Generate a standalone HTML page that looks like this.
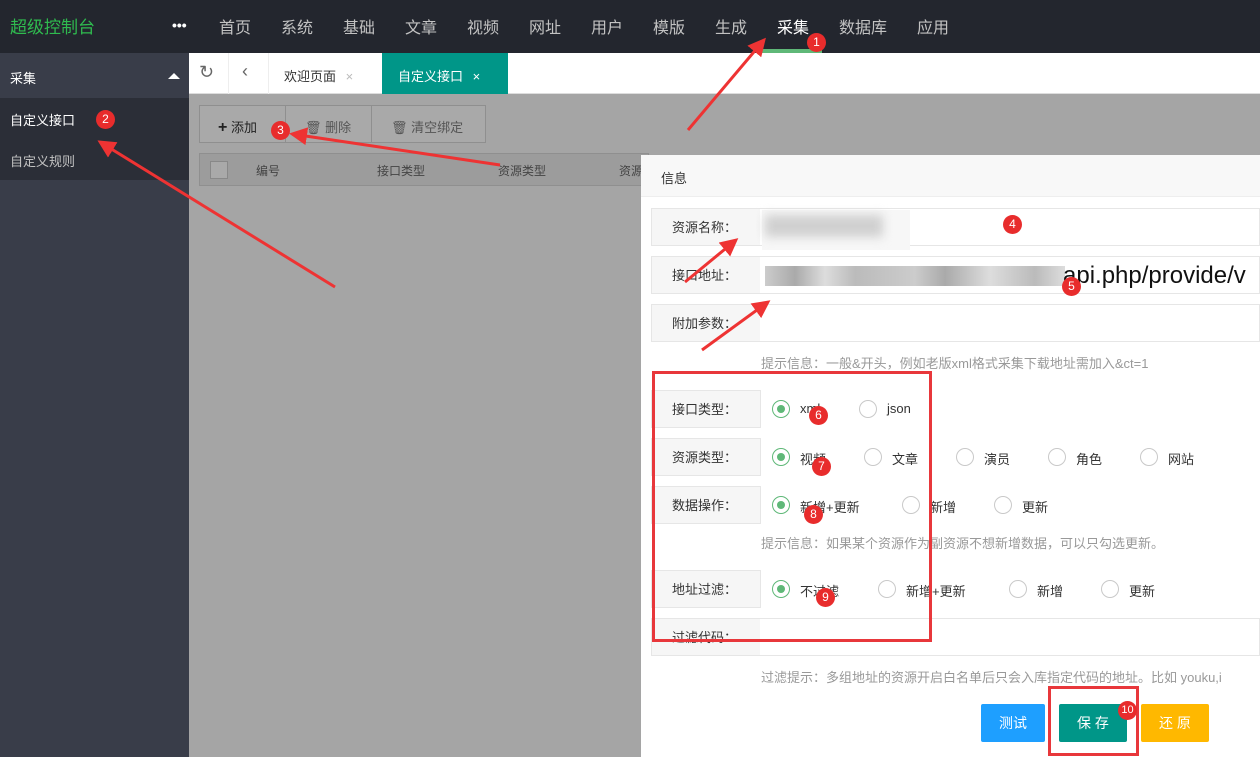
<!DOCTYPE html>
<html><head><meta charset="utf-8"><style>
*{margin:0;padding:0;box-sizing:border-box}
body{width:1260px;height:757px;overflow:hidden;position:relative;font-family:"Liberation Sans","Noto Sans CJK SC",sans-serif;font-size:14px;background:#a5a5a5}
.a{position:absolute}
.top{left:0;top:0;width:1260px;height:53px;background:#23262e}
.nav{top:14px;color:#c2c2c2;font-size:16px}
.side{left:0;top:53px;width:189px;height:704px;background:#393d49}
.lbl{left:651px;width:110px;height:38px;background:#f6f6f6;border:1px solid #e6e6e6;font-size:13px;color:#333;padding:8px 0 0 20px}
.inp{left:760px;width:500px;height:38px;border:1px solid #e6e6e6;border-left:none;background:#fff}
.rd{width:18px;height:18px;border:1px solid #c9c9c9;border-radius:50%;background:#fff}
.rd.on{border-color:#5FB878}
.rd.on:after{content:"";position:absolute;left:4px;top:4px;width:8px;height:8px;border-radius:50%;background:#5FB878}
.rt{font-size:13px;color:#333}
.hint{color:#999;font-size:13px}
.btn{top:704px;height:38px;color:#fff;font-size:14px;text-align:center;line-height:38px;border-radius:2px}
.n{width:19px;height:19px;border-radius:50%;background:#e82c2c;color:#fff;font-size:12px;text-align:center;line-height:19px}
</style></head><body>
<div class="a top"></div>
<div class="a" style="left:10px;top:13px;color:#2fbb4f;font-size:17px">超级控制台</div>
<div class="a" style="left:172px;top:17px;color:#fff;font-size:14px;font-weight:bold">•••</div>
<div class="a nav" style="left:219px">首页</div>
<div class="a nav" style="left:281px">系统</div>
<div class="a nav" style="left:343px">基础</div>
<div class="a nav" style="left:405px">文章</div>
<div class="a nav" style="left:467px">视频</div>
<div class="a nav" style="left:529px">网址</div>
<div class="a nav" style="left:591px">用户</div>
<div class="a nav" style="left:653px">模版</div>
<div class="a nav" style="left:715px">生成</div>
<div class="a nav" style="left:777px;color:#fff">采集</div>
<div class="a" style="left:762px;top:49px;width:60px;height:4px;background:#5FB878"></div>
<div class="a nav" style="left:839px">数据库</div>
<div class="a nav" style="left:917px">应用</div>

<div class="a side"></div>
<div class="a" style="left:0;top:53px;width:189px;height:45px;background:#393d49"></div>
<div class="a" style="left:10px;top:68px;color:#fff;font-size:13px">采集</div>
<div class="a" style="left:168px;top:73px;width:0;height:0;border-left:6px solid transparent;border-right:6px solid transparent;border-bottom:6px solid #fff"></div>
<div class="a" style="left:0;top:98px;width:189px;height:82px;background:#2b2e37"></div>
<div class="a" style="left:10px;top:110px;color:#fff;font-size:13px">自定义接口</div>
<div class="a" style="left:10px;top:151px;color:#c2c2c2;font-size:13px">自定义规则</div>

<div class="a" style="left:189px;top:53px;width:1071px;height:41px;background:#fff;border-bottom:1px solid #ddd"></div>
<div class="a" style="left:199px;top:62px;color:#666;font-size:18px">↻</div>
<div class="a" style="left:228px;top:53px;width:1px;height:41px;background:#eee"></div>
<div class="a" style="left:242px;top:61px;color:#666;font-size:18px">‹</div>
<div class="a" style="left:268px;top:53px;width:1px;height:41px;background:#eee"></div>
<div class="a" style="left:284px;top:66px;color:#333;font-size:13px">欢迎页面 <span style="color:#bbb;margin-left:6px">×</span></div>
<div class="a" style="left:382px;top:53px;width:126px;height:41px;background:#009688;color:#fff;font-size:13px;padding:13px 0 0 16px">自定义接口 <span style="margin-left:6px">×</span></div>
<div class="a" style="left:189px;top:94px;width:1071px;height:663px;background:#a5a5a5"></div>
<div class="a" style="left:199px;top:105px;width:287px;height:38px;border:1px solid #8f8f8f;background:#a9a9a9"></div>
<div class="a" style="left:285px;top:105px;width:1px;height:38px;background:#8f8f8f"></div>
<div class="a" style="left:371px;top:105px;width:1px;height:38px;background:#8f8f8f"></div>
<div class="a" style="left:218px;top:117px;color:#222;font-size:13px"><b style="font-size:16px">+</b> 添加</div>
<div class="a" style="left:305px;top:117px;color:#555;font-size:13px">🗑 删除</div>
<div class="a" style="left:391px;top:117px;color:#555;font-size:13px">🗑 清空绑定</div>
<div class="a" style="left:199px;top:153px;width:450px;height:33px;background:#9c9c9c;border:1px solid #8f8f8f"></div>
<div class="a" style="left:210px;top:161px;width:18px;height:18px;border:1px solid #888;background:#a9a9a9"></div>
<div class="a" style="left:256px;top:162px;color:#444;font-size:12px">编号</div>
<div class="a" style="left:377px;top:162px;color:#444;font-size:12px">接口类型</div>
<div class="a" style="left:498px;top:162px;color:#444;font-size:12px">资源类型</div>
<div class="a" style="left:619px;top:162px;color:#444;font-size:12px">资源</div>

<div class="a" style="left:641px;top:155px;width:619px;height:602px;background:#fff"></div>
<div class="a" style="left:641px;top:155px;width:619px;height:42px;background:#f8f8f8;border-bottom:1px solid #eee;font-size:13px;color:#333;padding:13px 0 0 20px">信息</div>

<div class="a lbl" style="top:208px">资源名称：</div><div class="a inp" style="top:208px"></div>
<div class="a" style="left:762px;top:210px;width:148px;height:40px;background:#f7f7f7"></div>
<div class="a" style="left:765px;top:215px;width:118px;height:22px;background:#d0d0d0;filter:blur(5px)"></div>
<div class="a lbl" style="top:256px">接口地址：</div><div class="a inp" style="top:256px"></div>
<div class="a" style="left:765px;top:266px;width:300px;height:20px;background:linear-gradient(90deg,#ccc,#aaa 10%,#ddd 20%,#bbb 30%,#ccc 50%,#aaa 60%,#ddd 75%,#bbb 90%,#ddd)"></div>
<div class="a" style="left:1063px;top:262px;font-size:24px;color:#111;white-space:nowrap">api.php/provide/v</div>
<div class="a lbl" style="top:304px">附加参数：</div><div class="a inp" style="top:304px"></div>
<div class="a hint" style="left:761px;top:353px">提示信息：一般&amp;开头，例如老版xml格式采集下载地址需加入&amp;ct=1</div>

<div class="a lbl" style="top:390px">接口类型：</div>
<div class="a rd on" style="left:772px;top:400px"></div><div class="a rt" style="left:800px;top:401px">xml</div>
<div class="a rd" style="left:859px;top:400px"></div><div class="a rt" style="left:887px;top:401px">json</div>
<div class="a lbl" style="top:438px">资源类型：</div>
<div class="a rd on" style="left:772px;top:448px"></div><div class="a rt" style="left:800px;top:449px">视频</div>
<div class="a rd" style="left:864px;top:448px"></div><div class="a rt" style="left:892px;top:449px">文章</div>
<div class="a rd" style="left:956px;top:448px"></div><div class="a rt" style="left:984px;top:449px">演员</div>
<div class="a rd" style="left:1048px;top:448px"></div><div class="a rt" style="left:1076px;top:449px">角色</div>
<div class="a rd" style="left:1140px;top:448px"></div><div class="a rt" style="left:1168px;top:449px">网站</div>
<div class="a lbl" style="top:486px">数据操作：</div>
<div class="a rd on" style="left:772px;top:496px"></div><div class="a rt" style="left:800px;top:497px">新增+更新</div>
<div class="a rd" style="left:902px;top:496px"></div><div class="a rt" style="left:930px;top:497px">新增</div>
<div class="a rd" style="left:994px;top:496px"></div><div class="a rt" style="left:1022px;top:497px">更新</div>
<div class="a hint" style="left:761px;top:533px">提示信息：如果某个资源作为副资源不想新增数据，可以只勾选更新。</div>
<div class="a lbl" style="top:570px">地址过滤：</div>
<div class="a rd on" style="left:772px;top:580px"></div><div class="a rt" style="left:800px;top:581px">不过滤</div>
<div class="a rd" style="left:878px;top:580px"></div><div class="a rt" style="left:906px;top:581px">新增+更新</div>
<div class="a rd" style="left:1009px;top:580px"></div><div class="a rt" style="left:1037px;top:581px">新增</div>
<div class="a rd" style="left:1101px;top:580px"></div><div class="a rt" style="left:1129px;top:581px">更新</div>
<div class="a lbl" style="top:618px">过滤代码：</div><div class="a inp" style="top:618px"></div>
<div class="a hint" style="left:761px;top:667px;white-space:nowrap">过滤提示：多组地址的资源开启白名单后只会入库指定代码的地址。比如 youku,i</div>

<div class="a btn" style="left:981px;width:64px;background:#1e9fff">测试</div>
<div class="a btn" style="left:1059px;width:68px;background:#009688">保 存</div>
<div class="a btn" style="left:1141px;width:68px;background:#FFB800">还 原</div>

<div class="a" style="left:652px;top:371px;width:280px;height:271px;border:3px solid #e8373b"></div>
<div class="a" style="left:1048px;top:686px;width:91px;height:70px;border:3px solid #e8373b"></div>

<svg class="a" style="left:0;top:0" width="1260" height="757">
<defs><marker id="h" markerWidth="6" markerHeight="6" refX="5" refY="3" orient="auto"><path d="M0,0 L6,3 L0,6 z" fill="#ee3333"/></marker></defs>
<g stroke="#ee3333" stroke-width="3" marker-end="url(#h)">
<line x1="688" y1="130" x2="764" y2="40"/>
<line x1="335" y1="287" x2="100" y2="142"/>
<line x1="500" y1="165" x2="292" y2="134"/>
<line x1="685" y1="282" x2="736" y2="240"/>
<line x1="702" y1="350" x2="768" y2="302"/>
</g></svg>
<div class="a n" style="left:807px;top:33px">1</div>
<div class="a n" style="left:96px;top:110px">2</div>
<div class="a n" style="left:271px;top:121px">3</div>
<div class="a n" style="left:1003px;top:215px">4</div>
<div class="a n" style="left:1062px;top:277px">5</div>
<div class="a n" style="left:809px;top:406px">6</div>
<div class="a n" style="left:812px;top:457px">7</div>
<div class="a n" style="left:804px;top:505px">8</div>
<div class="a n" style="left:816px;top:588px">9</div>
<div class="a n" style="left:1118px;top:701px;font-size:11px">10</div>
</body></html>
